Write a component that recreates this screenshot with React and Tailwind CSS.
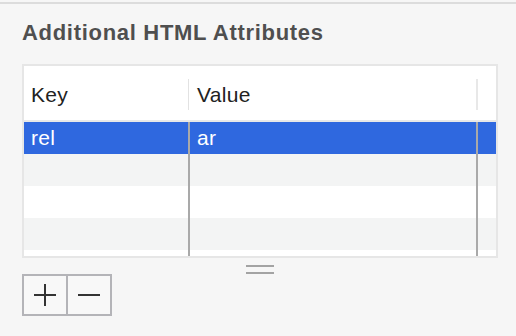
import React from "react";

const font = { fontFamily: '"Helvetica Neue", "Liberation Sans", Arial, sans-serif' };

function Row({ selected, shade, children, h = "h-[32px]" }) {
  const bg = selected ? "bg-[#2f68df]" : shade ? "bg-[#f3f4f4]" : "bg-white";
  const line = "bg-[#a9a9a9]";
  const txt = selected ? "text-white" : "text-[#222]";
  return (
    <div className={`flex ${h} ${bg}`}>
      <div className={`w-[164px] pl-[7px] flex items-center text-[21px] tracking-[0.3px] ${txt}`}>
        {children?.[0]}
      </div>
      <div className={`w-[2px] ${line}`} />
      <div className={`w-[286px] pl-[7px] flex items-center text-[21px] tracking-[0.3px] ${txt}`}>
        {children?.[1]}
      </div>
      <div className={`w-[2px] ${line}`} />
      <div className="flex-1" />
    </div>
  );
}

export default function App() {
  return (
    <div className="w-[516px] h-[336px] bg-[#f6f6f6] overflow-hidden" style={font}>
      <div className="h-[2px]" />
      <div className="h-[2px] bg-[#dcdcdc]" />
      <div className="pl-[22px] pt-[16px] h-[60px]">
        <div className="text-[22px] leading-[26px] font-bold text-[#4f4f4f] tracking-[0.7px]">
          Additional HTML Attributes
        </div>
      </div>
      <div className="ml-[22px] w-[476px] border-2 border-[#e6e6e6] bg-white">
        <div className="flex h-[54px] bg-white items-center">
          <div className="w-[164px] pl-[7px] text-[21px] tracking-[0.3px] text-[#222] pt-[4px]">Key</div>
          <div className="w-[1px] h-[31px] mt-[3px] bg-[#e2e2e2]" />
          <div className="w-[1px]" />
          <div className="w-[286px] pl-[7px] text-[21px] tracking-[0.3px] text-[#222] pt-[4px]">Value</div>
          <div className="w-[2px] h-[31px] mt-[3px] bg-[#e8e8e8]" />
          <div className="flex-1" />
        </div>
        <div className="h-[2px] bg-[#e8e8e8]" />
        <Row selected>{["rel", "ar"]}</Row>
        <Row shade>{["", ""]}</Row>
        <Row>{["", ""]}</Row>
        <Row shade>{["", ""]}</Row>
        <Row h="h-[6px]">{["", ""]}</Row>
      </div>
      <div className="h-[16px] flex flex-col items-center w-[520px]">
        <div className="mt-[7px] w-[28px] h-[2px] bg-[#a3a3a3]" />
        <div className="mt-[5px] w-[28px] h-[2px] bg-[#a3a3a3]" />
      </div>
      <div className="ml-[22px] w-[90px] h-[42px] border-2 border-[#b4b4b8] flex bg-[#f8f8f8]">
        <div className="w-[42px] h-full flex items-center justify-center">
          <svg width="22" height="22" viewBox="0 0 22 22">
            <rect x="0" y="10" width="22" height="2" fill="#333" />
            <rect x="10" y="0" width="2" height="22" fill="#333" />
          </svg>
        </div>
        <div className="w-[2px] h-full bg-[#b4b4b8]" />
        <div className="w-[42px] h-full flex items-center justify-center">
          <svg width="22" height="22" viewBox="0 0 22 22">
            <rect x="0" y="10" width="22" height="2" fill="#333" />
          </svg>
        </div>
      </div>
    </div>
  );
}
